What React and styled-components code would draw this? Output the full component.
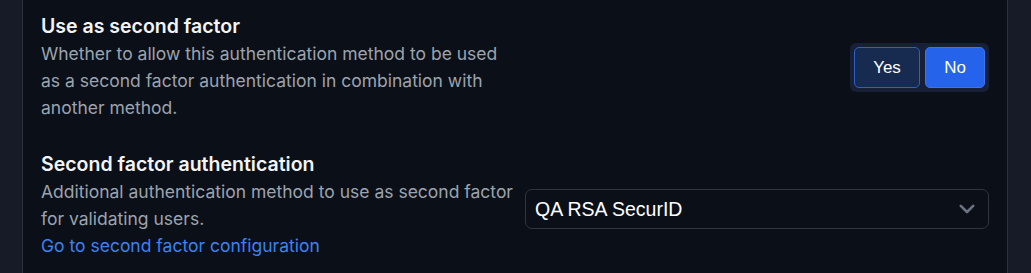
import React from "react";
import styled, { createGlobalStyle } from "styled-components";

const Global = createGlobalStyle`
  html, body { margin: 0; padding: 0; background: #0b0f17; }
  body { font-family: Inter, "Noto Sans", sans-serif; }
`;

const Frame = styled.div`
  display: flex;
  width: 1031px;
  height: 273px;
  background: #161b27;
  overflow: hidden;
`;

const Gutter = styled.div`
  width: ${(p) => p.$w}px;
  flex: none;
`;

const Panel = styled.div`
  flex: 1;
  background: #0b0f17;
  border-left: 1px solid #2b303b;
  border-right: 1px solid #2b303b;
  padding: 12px 18px 0 18px;
  display: flex;
  flex-direction: column;
  gap: 29px;
`;

const Row = styled.div`
  display: grid;
  grid-template-columns: 474px 464px;
  column-gap: 10px;
  align-items: center;
`;

const Info = styled.div`
  display: flex;
  flex-direction: column;
`;

const Title = styled.div`
  font-size: 19.5px;
  line-height: 28px;
  font-weight: 600;
  color: #f3f4f6;
`;

const Desc = styled.div`
  font-size: 17.5px;
  line-height: 27px;
  color: #9ca3af;
  max-width: ${(p) => p.$max || 474}px;
`;

const Link = styled.a`
  font-size: 17.5px;
  line-height: 27px;
  color: #3b82f6;
  text-decoration: none;
`;

const Control = styled.div`
  display: flex;
  justify-content: flex-end;
  margin-top: ${(p) => p.$mt || 0}px;
`;

const Toggle = styled.div`
  display: flex;
  gap: 5px;
  padding: 4px;
  background: #172036;
  border-radius: 6px;
`;

const ToggleBtn = styled.button`
  font-family: "Liberation Sans", Arial, sans-serif;
  font-size: 17px;
  color: #ffffff;
  height: 41px;
  width: ${(p) => p.$w}px;
  border-radius: 5px;
  border: 1px solid ${(p) => (p.$active ? "#3b74f0" : "#2d62c4")};
  background: ${(p) => (p.$active ? "#2563eb" : "#172a4f")};
  padding: 0;
`;

const Select = styled.div`
  width: 464px;
  height: 40px;
  box-sizing: border-box;
  border: 1px solid #30353f;
  border-radius: 7px;
  display: flex;
  align-items: center;
  justify-content: space-between;
  padding: 0 13px 0 9px;
  font-family: "Liberation Sans", Arial, sans-serif;
  font-size: 19.5px;
  color: #ffffff;
`;

const Chevron = () => (
  <svg width="16" height="10" viewBox="0 0 16 10" fill="none">
    <path d="M1.8 1.8 L8 8 L14.2 1.8" stroke="#6b7280" strokeWidth="2.6" strokeLinecap="round" strokeLinejoin="round" />
  </svg>
);

export default function App() {
  return (
    <>
      <Global />
      <Frame>
        <Gutter $w={22} />
        <Panel>
          <Row>
            <Info>
              <Title>Use as second factor</Title>
              <Desc $max={470}>
                Whether to allow this authentication method to be used as a second factor authentication in combination with another method.
              </Desc>
            </Info>
            <Control $mt={2}>
              <Toggle>
                <ToggleBtn $w={66}>Yes</ToggleBtn>
                <ToggleBtn $w={60} $active>No</ToggleBtn>
              </Toggle>
            </Control>
          </Row>
          <Row>
            <Info>
              <Title>Second factor authentication</Title>
              <Desc>
                Additional authentication method to use as second factor for validating users.
              </Desc>
              <Link href="#">Go to second factor configuration</Link>
            </Info>
            <Control $mt={9}>
              <Select>
                <span>QA RSA SecurID</span>
                <Chevron />
              </Select>
            </Control>
          </Row>
        </Panel>
        <Gutter $w={23} />
      </Frame>
    </>
  );
}
